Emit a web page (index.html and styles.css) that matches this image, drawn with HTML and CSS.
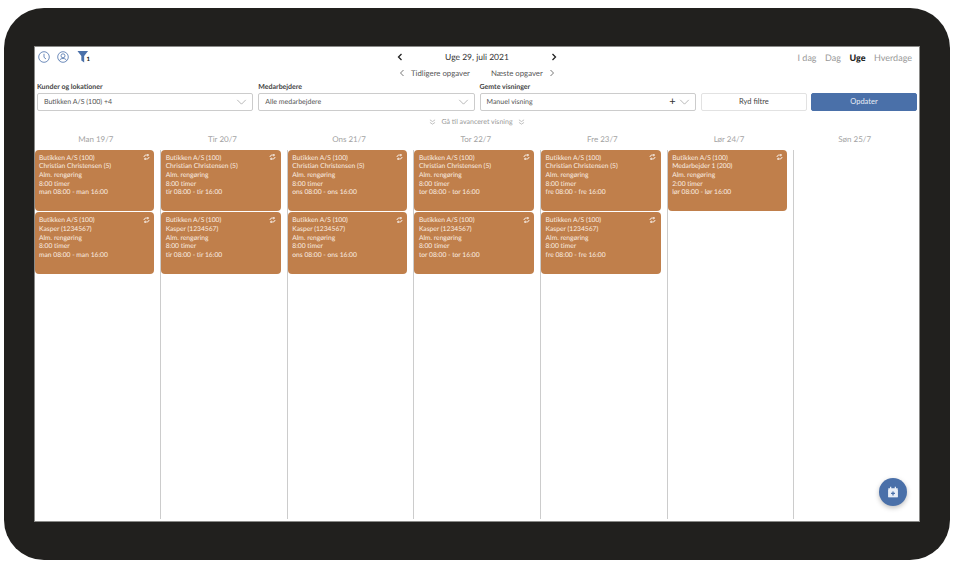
FILE: index.html
```html
<!DOCTYPE html>
<html lang="da">
<head>
<meta charset="utf-8">
<title>Uge 29, juli 2021</title>
<link rel="stylesheet" href="styles.css">
</head>
<body>
<div class="frame">
<main class="screen">
  <header class="top">
    <div class="tools">
      <svg class="ic" viewBox="0 0 12 12"><circle cx="6" cy="6" r="5.3"/><path d="M6 2.8V6.3L8 8"/></svg>
      <svg class="ic" viewBox="0 0 12 12"><circle cx="6" cy="6" r="5.3"/><circle cx="6" cy="4.8" r="2"/><path d="M2.5 9.6C3 8 4.5 7.5 6 7.5S9 8 9.5 9.6"/></svg>
      <span class="filter"><svg class="funnel" viewBox="0 0 12 13"><path d="M0 0H12L7.6 5.6V13L4.4 10.6V5.6Z"/></svg><b class="count">1</b></span>
    </div>
    <div class="nav">
      <div class="week">
        <svg class="chev strong" viewBox="0 0 6 8"><path d="M4.5 1L1.5 4L4.5 7"/></svg>
        <span class="week-title">Uge 29, juli 2021</span>
        <svg class="chev strong" viewBox="0 0 6 8"><path d="M1.5 1L4.5 4L1.5 7"/></svg>
      </div>
      <div class="tasks">
        <svg class="chev" viewBox="0 0 6 8"><path d="M4.5 1L1.5 4L4.5 7"/></svg>
        <span class="task-a">Tidligere opgaver</span>
        <span class="task-b">Næste opgaver</span>
        <svg class="chev" viewBox="0 0 6 8"><path d="M1.5 1L4.5 4L1.5 7"/></svg>
      </div>
    </div>
    <nav class="views">
      <span>I dag</span><span>Dag</span><span class="on">Uge</span><span>Hverdage</span>
    </nav>
  </header>

  <section class="filters">
    <div class="field">
      <label class="lbl">Kunder og lokationer</label>
      <div class="select"><span class="val">Butikken A/S (100) +4</span><svg class="caret" viewBox="0 0 12 7"><path d="M1 1L6 6L11 1"/></svg></div>
    </div>
    <div class="field">
      <label class="lbl">Medarbejdere</label>
      <div class="select"><span class="val">Alle medarbejdere</span><svg class="caret" viewBox="0 0 12 7"><path d="M1 1L6 6L11 1"/></svg></div>
    </div>
    <div class="field">
      <label class="lbl">Gemte visninger</label>
      <div class="select"><span class="val">Manuel visning</span><span class="plus">+</span><svg class="caret" viewBox="0 0 12 7"><path d="M1 1L6 6L11 1"/></svg></div>
    </div>
    <div class="actions">
      <button class="btn">Ryd filtre</button>
      <button class="btn primary">Opdater</button>
    </div>
  </section>

  <div class="advanced">
    <svg class="dbl" viewBox="0 0 8 7"><path d="M1 1L4 3L7 1M1 4L4 6L7 4"/></svg>
    <span>Gå til avanceret visning</span>
    <svg class="dbl" viewBox="0 0 8 7"><path d="M1 1L4 3L7 1M1 4L4 6L7 4"/></svg>
  </div>

  <section class="week-grid">
    <div class="col">
      <h3 class="day">Man 19/7</h3>
      <div class="lane">
        <article class="card"><svg class="rep" viewBox="0 0 10 8"><path d="M1.5 4C1.5 2 3 1.2 5 1.2H7.5M6.2 0L8 1.2L6.2 2.6M8.5 4C8.5 6 7 6.8 5 6.8H2.5M3.8 5.4L2 6.8L3.8 8"/></svg>Butikken A/S (100)<br>Christian Christensen (5)<br>Alm. rengøring<br>8:00 timer<br>man 08:00 - man 16:00</article>
        <article class="card"><svg class="rep" viewBox="0 0 10 8"><path d="M1.5 4C1.5 2 3 1.2 5 1.2H7.5M6.2 0L8 1.2L6.2 2.6M8.5 4C8.5 6 7 6.8 5 6.8H2.5M3.8 5.4L2 6.8L3.8 8"/></svg>Butikken A/S (100)<br>Kasper (1234567)<br>Alm. rengøring<br>8:00 timer<br>man 08:00 - man 16:00</article>
      </div>
    </div>
    <div class="col">
      <h3 class="day">Tir 20/7</h3>
      <div class="lane">
        <article class="card"><svg class="rep" viewBox="0 0 10 8"><path d="M1.5 4C1.5 2 3 1.2 5 1.2H7.5M6.2 0L8 1.2L6.2 2.6M8.5 4C8.5 6 7 6.8 5 6.8H2.5M3.8 5.4L2 6.8L3.8 8"/></svg>Butikken A/S (100)<br>Christian Christensen (5)<br>Alm. rengøring<br>8:00 timer<br>tir 08:00 - tir 16:00</article>
        <article class="card"><svg class="rep" viewBox="0 0 10 8"><path d="M1.5 4C1.5 2 3 1.2 5 1.2H7.5M6.2 0L8 1.2L6.2 2.6M8.5 4C8.5 6 7 6.8 5 6.8H2.5M3.8 5.4L2 6.8L3.8 8"/></svg>Butikken A/S (100)<br>Kasper (1234567)<br>Alm. rengøring<br>8:00 timer<br>tir 08:00 - tir 16:00</article>
      </div>
    </div>
    <div class="col">
      <h3 class="day">Ons 21/7</h3>
      <div class="lane">
        <article class="card"><svg class="rep" viewBox="0 0 10 8"><path d="M1.5 4C1.5 2 3 1.2 5 1.2H7.5M6.2 0L8 1.2L6.2 2.6M8.5 4C8.5 6 7 6.8 5 6.8H2.5M3.8 5.4L2 6.8L3.8 8"/></svg>Butikken A/S (100)<br>Christian Christensen (5)<br>Alm. rengøring<br>8:00 timer<br>ons 08:00 - ons 16:00</article>
        <article class="card"><svg class="rep" viewBox="0 0 10 8"><path d="M1.5 4C1.5 2 3 1.2 5 1.2H7.5M6.2 0L8 1.2L6.2 2.6M8.5 4C8.5 6 7 6.8 5 6.8H2.5M3.8 5.4L2 6.8L3.8 8"/></svg>Butikken A/S (100)<br>Kasper (1234567)<br>Alm. rengøring<br>8:00 timer<br>ons 08:00 - ons 16:00</article>
      </div>
    </div>
    <div class="col">
      <h3 class="day">Tor 22/7</h3>
      <div class="lane">
        <article class="card"><svg class="rep" viewBox="0 0 10 8"><path d="M1.5 4C1.5 2 3 1.2 5 1.2H7.5M6.2 0L8 1.2L6.2 2.6M8.5 4C8.5 6 7 6.8 5 6.8H2.5M3.8 5.4L2 6.8L3.8 8"/></svg>Butikken A/S (100)<br>Christian Christensen (5)<br>Alm. rengøring<br>8:00 timer<br>tor 08:00 - tor 16:00</article>
        <article class="card"><svg class="rep" viewBox="0 0 10 8"><path d="M1.5 4C1.5 2 3 1.2 5 1.2H7.5M6.2 0L8 1.2L6.2 2.6M8.5 4C8.5 6 7 6.8 5 6.8H2.5M3.8 5.4L2 6.8L3.8 8"/></svg>Butikken A/S (100)<br>Kasper (1234567)<br>Alm. rengøring<br>8:00 timer<br>tor 08:00 - tor 16:00</article>
      </div>
    </div>
    <div class="col">
      <h3 class="day">Fre 23/7</h3>
      <div class="lane">
        <article class="card"><svg class="rep" viewBox="0 0 10 8"><path d="M1.5 4C1.5 2 3 1.2 5 1.2H7.5M6.2 0L8 1.2L6.2 2.6M8.5 4C8.5 6 7 6.8 5 6.8H2.5M3.8 5.4L2 6.8L3.8 8"/></svg>Butikken A/S (100)<br>Christian Christensen (5)<br>Alm. rengøring<br>8:00 timer<br>fre 08:00 - fre 16:00</article>
        <article class="card"><svg class="rep" viewBox="0 0 10 8"><path d="M1.5 4C1.5 2 3 1.2 5 1.2H7.5M6.2 0L8 1.2L6.2 2.6M8.5 4C8.5 6 7 6.8 5 6.8H2.5M3.8 5.4L2 6.8L3.8 8"/></svg>Butikken A/S (100)<br>Kasper (1234567)<br>Alm. rengøring<br>8:00 timer<br>fre 08:00 - fre 16:00</article>
      </div>
    </div>
    <div class="col">
      <h3 class="day">Lør 24/7</h3>
      <div class="lane">
        <article class="card"><svg class="rep" viewBox="0 0 10 8"><path d="M1.5 4C1.5 2 3 1.2 5 1.2H7.5M6.2 0L8 1.2L6.2 2.6M8.5 4C8.5 6 7 6.8 5 6.8H2.5M3.8 5.4L2 6.8L3.8 8"/></svg>Butikken A/S (100)<br>Medarbejder 1 (200)<br>Alm. rengøring<br>2:00 timer<br>lør 08:00 - lør 16:00</article>
      </div>
    </div>
    <div class="col">
      <h3 class="day">Søn 25/7</h3>
      <div class="lane"></div>
    </div>
  </section>

  <button class="fab" aria-label="Ny opgave">
    <svg viewBox="0 0 14 14" class="fab-ic"><path class="fab-fill" d="M1.5 2.5H3.5V1H5V2.5H9V1H10.5V2.5H12.5V13H1.5ZM3 5.2V11.6H11V5.2Z"/><path class="fab-fill" d="M1.5 4.5H12.5V13H1.5Z"/><path class="fab-plus" d="M7 6.3V11M4.7 8.6H9.3"/></svg>
  </button>
</main>
</div>
</body>
</html>
```
FILE: styles.css
```css
* { box-sizing: border-box; }
html, body { margin: 0; padding: 0; background: #fff; }
body { width: 954px; height: 567px; overflow: hidden; font-family: "Lato", "Open Sans", sans-serif; text-rendering: geometricPrecision; }

.frame {
  margin: 8px 4px 0;
  width: 946px;
  height: 552px;
  background: #21201e;
  border-radius: 40px;
  padding: 39px 30px 39px 31px;
}
.screen {
  position: relative;
  width: 884px;
  height: 474px;
  background: #fff;
  display: flex;
  flex-direction: column;
  box-shadow: 0 0 0 1px #8a8a88;
}

.top {
  display: grid;
  grid-template-columns: 1fr 200px 1fr;
  height: 33px;
  padding: 3px 3px 0;
}
.tools { display: flex; align-items: flex-start; gap: 7px; margin-top: 1px; }
.ic { width: 12px; height: 12px; fill: none; stroke: #4a70a9; stroke-width: .8; }
.filter { display: flex; align-items: flex-start; margin-left: 1px; }
.funnel { width: 11.5px; height: 11.5px; fill: #4a70a9; }
.count { font-size: 6px; line-height: 6px; margin: 6px 0 0 -2px; color: #222; font-weight: 900; }

.nav { display: flex; flex-direction: column; align-items: center; }
.week { display: flex; align-items: center; justify-content: space-between; width: 160px; height: 14px; }
.week-title { font-size: 8.5px; color: #333; }
.chev { width: 6px; height: 8px; fill: none; stroke: #777; stroke-width: 1; }
.chev.strong { stroke: #222; stroke-width: 1.3; }
.tasks { display: flex; align-items: center; width: 156px; height: 14px; margin-top: 2px; font-size: 7.8px; color: #555; }
.task-a { margin-left: 6px; }
.task-b { margin-left: 21px; margin-right: 6px; }

.views { display: flex; justify-content: flex-end; gap: 8.5px; margin-right: 4px; font-size: 9px; color: #999; height: 14px; align-items: center; }
.views .on { color: #222; font-weight: 900; }

.filters {
  display: grid;
  grid-template-columns: repeat(4, 1fr);
  gap: 5px;
  padding: 0 2px;
}
.lbl { display: block; font-size: 7px; font-weight: 700; color: #444; line-height: 9px; height: 10px; margin-top: 3px; }
.select {
  display: flex;
  align-items: center;
  height: 17.5px;
  padding: 0 3px 0 6px;
  border: 1px solid #ccc;
  border-radius: 2px;
  font-size: 7px;
  color: #555;
}
.val { flex: 1; }
.plus { font-size: 11px; color: #333; line-height: 1; margin-right: 3px; }
.caret { width: 11px; height: 6px; margin-right: 2px; fill: none; stroke: #999; stroke-width: .8; }
.actions { display: flex; gap: 4px; padding-top: 13px; }
.btn {
  flex: 1;
  height: 17.5px;
  padding: 0;
  border: 1px solid #e2e2e2;
  border-radius: 2px;
  background: #fff;
  font: 7.5px "Lato", sans-serif;
  color: #444;
}
.btn.primary { background: #4a70a9; border-color: #4a70a9; color: #e8edf5; }

.advanced {
  display: flex;
  justify-content: center;
  align-items: center;
  gap: 5px;
  height: 12px;
  margin-top: 5px;
  font-size: 7px;
  color: #999;
}
.dbl { width: 7px; height: 6px; fill: none; stroke: #999; stroke-width: .7; }

.week-grid {
  display: grid;
  grid-template-columns: repeat(6, 126.65px) 1fr;
  flex: 1;
  margin: 4px 0 0 -.5px;
}
.col { display: flex; flex-direction: column; min-width: 0; }
.day { margin: 0; height: 18px; line-height: 14px; font-size: 8px; font-weight: 400; color: #a3a3a3; text-align: center; padding-right: 4px; }
.lane { flex: 1; display: flex; flex-direction: column; gap: 1px; padding-right: 6px; border-right: 1px solid #ccc; margin-bottom: 2px; }
.col:last-child .lane { border-right: 0; }
.card {
  position: relative;
  height: 61.5px;
  padding: 4.3px 4.5px;
  background: #c07f4b;
  border-radius: 4px;
  font-size: 6.7px;
  line-height: 8.67px;
  color: #fbeee2;
  white-space: nowrap;
}
.rep { position: absolute; top: 4.5px; right: 4.5px; width: 7px; height: 6px; fill: none; stroke: #fff; stroke-width: 1.3; }

.fab {
  position: absolute;
  right: 12px;
  bottom: 15px;
  width: 28px;
  height: 28px;
  padding: 0;
  border: 0;
  border-radius: 50%;
  background: #4a70a9;
  box-shadow: 0 2px 5px rgba(0,0,0,.25);
  display: flex;
  align-items: center;
  justify-content: center;
}
.fab-ic { width: 12px; height: 12px; }
.fab-fill { fill: #e9eef6; }
.fab-plus { fill: none; stroke: #4a70a9; stroke-width: 1.5; }
```
